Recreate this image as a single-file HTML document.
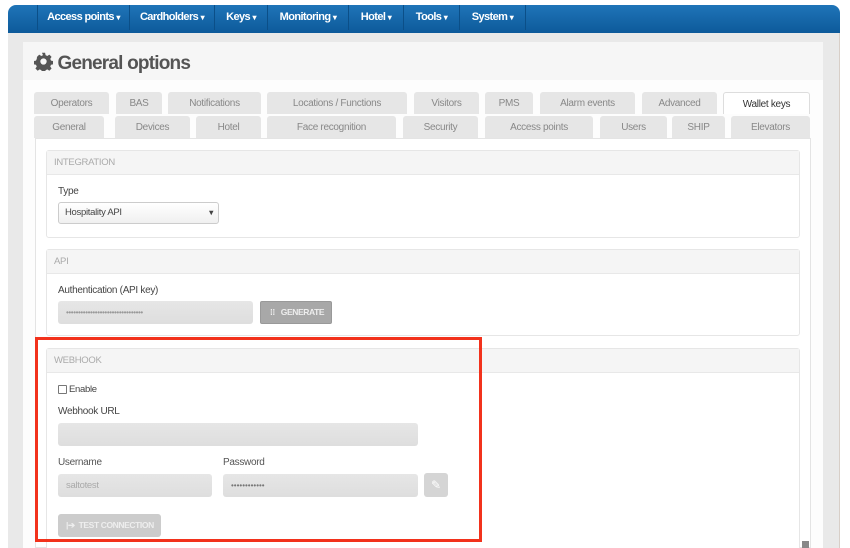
<!DOCTYPE html><html><head><style>
*{box-sizing:border-box;margin:0;padding:0}
html,body{width:850px;height:548px;overflow:hidden}
body{background:#fff;font-family:"Liberation Sans",sans-serif;position:relative;font-size:11px;color:#333;white-space:nowrap}
.abs{position:absolute}
.nav{left:8px;top:5px;width:832px;height:28px;background:linear-gradient(#1f74b8,#0d5a9a);border-radius:8px 8px 0 0}
.ni{position:absolute;top:5px;height:25px;color:#fff;font-weight:bold;font-size:11px;line-height:25px;text-align:center;border-right:1px solid #0b4f88;letter-spacing:-0.6px}
.outer{left:8px;top:33px;width:832px;height:515px;background:#e9e9e9}
.inner{left:23px;top:42px;width:800px;height:506px;background:#fdfdfd}
.hdr{left:23px;top:42px;width:800px;height:38px;background:#f6f6f6}
.tab{position:absolute;height:22px;background:#e6e6e6;border-radius:3px 3px 0 0;color:#888;font-size:10px;line-height:24px;text-align:center;letter-spacing:-0.3px}
.content{left:35px;top:138px;width:776px;height:410px;background:#fff;border:1px solid #e4e4e4}
.sec{position:absolute;left:46px;width:754px;border:1px solid #e6e6e6;border-radius:3px;background:#fff}
.sh{height:24px;background:#f5f5f5;border-bottom:1px solid #e8e8e8;color:#aaa;font-size:9.5px;line-height:24px;padding-left:7px;letter-spacing:-0.3px}
.lbl{position:absolute;font-size:10px;color:#444;letter-spacing:-0.3px}
.inp{position:absolute;background:linear-gradient(#e6e6e6,#dedede);border-radius:3px;color:#999;font-size:9.5px;line-height:23px;padding-left:8px}
</style></head><body>
<div class="abs outer"></div>
<div class="abs nav"></div>
<div class="ni" style="left:37px;width:93px;border-left:1px solid #0b4f88">Access points <span style="font-size:8px">▾</span></div>
<div class="ni" style="left:130px;width:85px">Cardholders <span style="font-size:8px">▾</span></div>
<div class="ni" style="left:215px;width:53px">Keys <span style="font-size:8px">▾</span></div>
<div class="ni" style="left:268px;width:81px">Monitoring <span style="font-size:8px">▾</span></div>
<div class="ni" style="left:349px;width:55px">Hotel <span style="font-size:8px">▾</span></div>
<div class="ni" style="left:404px;width:56px">Tools <span style="font-size:8px">▾</span></div>
<div class="ni" style="left:460px;width:66px">System <span style="font-size:8px">▾</span></div>
<div class="abs inner"></div>
<div class="abs hdr"></div>
<div class="abs" style="left:34px;top:52px;font-size:19px;font-weight:bold;color:#555;letter-spacing:-0.8px">
<svg width="19" height="19" viewBox="0 0 24 24" style="vertical-align:-2px"><path fill="#555" d="M10 1h4l.6 3 2.2 1 2.6-1.7 2.8 2.8-1.7 2.6 1 2.2 3 .6v4l-3 .6-1 2.2 1.7 2.6-2.8 2.8-2.6-1.7-2.2 1-.6 3h-4l-.6-3-2.2-1-2.6 1.7-2.8-2.8 1.7-2.6-1-2.2-3-.6v-4l3-.6 1-2.2L3.8 6.1l2.8-2.8 2.6 1.7 2.2-1zM12 8a4 4 0 100 8 4 4 0 000-8z"/></svg>
 General options</div>
<div class="tab" style="top:92px;left:34px;width:75px">Operators</div>
<div class="tab" style="top:92px;left:116px;width:46px">BAS</div>
<div class="tab" style="top:92px;left:168px;width:93px">Notifications</div>
<div class="tab" style="top:92px;left:267px;width:140px">Locations / Functions</div>
<div class="tab" style="top:92px;left:414px;width:65px">Visitors</div>
<div class="tab" style="top:92px;left:485px;width:48px">PMS</div>
<div class="tab" style="top:92px;left:540px;width:95px">Alarm events</div>
<div class="tab" style="top:92px;left:642px;width:75px">Advanced</div>
<div class="tab" style="top:92px;left:723px;width:87px;background:#fff;border:1px solid #ddd;border-bottom:none;color:#333">Wallet keys</div>
<div class="tab" style="top:116px;left:34px;width:70px">General</div>
<div class="tab" style="top:116px;left:115px;width:75px">Devices</div>
<div class="tab" style="top:116px;left:196px;width:65px">Hotel</div>
<div class="tab" style="top:116px;left:267px;width:129px">Face recognition</div>
<div class="tab" style="top:116px;left:403px;width:75px">Security</div>
<div class="tab" style="top:116px;left:485px;width:108px">Access points</div>
<div class="tab" style="top:116px;left:600px;width:67px">Users</div>
<div class="tab" style="top:116px;left:672px;width:53px">SHIP</div>
<div class="tab" style="top:116px;left:731px;width:79px">Elevators</div>
<div class="abs content"></div>
<div class="sec" style="top:150px;height:88px"><div class="sh">INTEGRATION</div></div>
<div class="lbl" style="left:58px;top:186px">Type</div>
<div class="abs" style="left:58px;top:202px;width:161px;height:22px;border:1px solid #ccc;border-radius:3px;background:linear-gradient(#fff,#f0f0f0);font-size:9.5px;line-height:20px;padding-left:6px;color:#444;letter-spacing:-0.3px">Hospitality API<span style="position:absolute;right:5px;top:0;font-weight:bold;font-size:8px">▾</span></div>
<div class="sec" style="top:249px;height:87px"><div class="sh">API</div></div>
<div class="lbl" style="left:58px;top:285px">Authentication (API key)</div>
<div class="inp" style="left:58px;top:301px;width:195px;height:23px;font-size:8px;letter-spacing:-0.4px">••••••••••••••••••••••••••••••••</div>
<div class="abs" style="left:260px;top:301px;width:72px;height:23px;background:#a8a8a8;border:1px solid #999;border-radius:2px;color:#eee;font-weight:bold;font-size:8.5px;line-height:21px;padding-left:9px;letter-spacing:-0.4px">⁞⁞&nbsp;&nbsp;&nbsp;GENERATE</div>
<div class="sec" style="top:348px;height:210px"><div class="sh">WEBHOOK</div></div>
<div class="abs" style="left:58px;top:385px;width:9px;height:9px;border:1px solid #777;border-radius:1px"></div>
<div class="lbl" style="left:69px;top:384px;font-size:9.5px">Enable</div>
<div class="lbl" style="left:58px;top:406px">Webhook URL</div>
<div class="inp" style="left:58px;top:423px;width:360px;height:23px"></div>
<div class="lbl" style="left:58px;top:457px;color:#555">Username</div>
<div class="lbl" style="left:223px;top:457px;color:#555">Password</div>
<div class="inp" style="left:58px;top:474px;width:154px;height:23px;color:#aaa;letter-spacing:-0.3px">saltotest</div>
<div class="inp" style="left:223px;top:474px;width:195px;height:23px;color:#777;font-size:8px;letter-spacing:0px">••••••••••••</div>
<div class="abs" style="left:424px;top:473px;width:24px;height:24px;background:#d5d5d5;border-radius:3px;color:#fff;text-align:center;line-height:24px;font-size:12px">✎</div>
<div class="abs" style="left:58px;top:514px;width:103px;height:23px;background:#ccc;border-radius:3px;color:#eee;font-weight:bold;font-size:8.5px;line-height:23px;padding-left:8px;letter-spacing:-0.4px">|➔&nbsp; TEST CONNECTION</div>
<div class="abs" style="left:35px;top:337px;width:447px;height:205px;border:3px solid #f2321c"></div>
<div class="abs" style="left:802px;top:541px;width:7px;height:7px;background:#888"></div>
<div class="abs" style="left:839px;top:33px;width:1px;height:515px;background:#d8cfc8"></div>
</body></html>
